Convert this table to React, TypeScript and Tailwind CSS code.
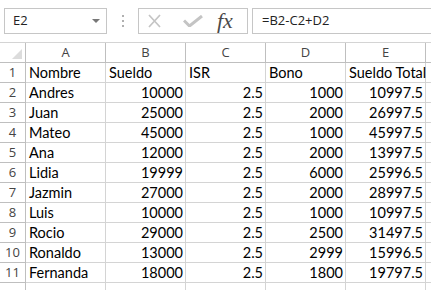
import React from 'react';

const rows = [
  ['Andres', 10000, 2.5, 1000, 10997.5],
  ['Juan', 25000, 2.5, 2000, 26997.5],
  ['Mateo', 45000, 2.5, 1000, 45997.5],
  ['Ana', 12000, 2.5, 2000, 13997.5],
  ['Lidia', 19999, 2.5, 6000, 25996.5],
  ['Jazmin', 27000, 2.5, 2000, 28997.5],
  ['Luis', 10000, 2.5, 1000, 10997.5],
  ['Rocio', 29000, 2.5, 2500, 31497.5],
  ['Ronaldo', 13000, 2.5, 2999, 15996.5],
  ['Fernanda', 18000, 2.5, 1800, 19797.5],
];

const headers = ['Nombre', 'Sueldo', 'ISR', 'Bono', 'Sueldo Total'];
const cols = ['A', 'B', 'C', 'D', 'E'];

const cellFont = { fontFamily: 'Lato, "Liberation Sans", sans-serif' };
const uiFont = { fontFamily: '"Open Sans", "Liberation Sans", sans-serif' };

const App = () => {
  return (
    <div className="w-[431px] h-[290px] overflow-hidden bg-white">
      {/* Barra de fórmulas */}
      <div className="h-[43px] flex items-start pt-[8px] pl-[4px] border-b border-[#d4d4d4]" style={uiFont}>
        <div className="w-[103px] h-[26px] border border-[#c6c6c6] flex items-center justify-between pl-[8px] pr-[6px]">
          <span className="text-[13px] text-[#222]">E2</span>
          <svg width="8" height="5" viewBox="0 0 8 5"><path d="M0 0h8L4 4z" fill="#777" /></svg>
        </div>
        <div className="w-[31px] h-[26px] flex flex-col items-center justify-center gap-[3px]">
          <span className="w-[2px] h-[2px] bg-[#b0b0b0]" />
          <span className="w-[2px] h-[2px] bg-[#b0b0b0]" />
          <span className="w-[2px] h-[2px] bg-[#b0b0b0]" />
        </div>
        <div className="w-[110px] h-[26px] border border-[#c6c6c6] flex items-center">
          <svg className="ml-[9px]" width="13" height="14" viewBox="0 0 13 14">
            <path d="M1 1L12 13M12 1L1 13" stroke="#c4c4c4" strokeWidth="1.7" />
          </svg>
          <svg className="ml-[22px]" width="20" height="12" viewBox="0 0 20 12">
            <path d="M1 5.5l5.5 5.5L19 1" stroke="#c4c4c4" strokeWidth="3" fill="none" />
          </svg>
          <span className="ml-[14px] text-[22px] italic text-[#4a4a4a] leading-none" style={{ fontFamily: '"Liberation Serif", serif' }}>fx</span>
        </div>
        <div className="flex-1 h-[26px] ml-[4px] border border-r-0 border-[#c6c6c6] flex items-center pl-[9px]">
          <span className="text-[13px] text-[#222]">=B2-C2+D2</span>
        </div>
      </div>

      {/* Hoja */}
      <div className="grid grid-cols-[26px_80px_80px_80px_80px_80px_80px] auto-rows-[20px]" style={cellFont}>
        <div className="border-r border-b border-[#bfbfbf] relative">
          <svg className="absolute right-[3px] bottom-[3px]" width="10" height="10" viewBox="0 0 10 10">
            <path d="M10 0V10H0z" fill="#dcdcdc" />
          </svg>
        </div>
        {[...cols, ''].map((c, i) => (
          <div key={i} className="border-r border-b border-[#bfbfbf] flex items-center justify-center text-[13px] text-[#444]" style={uiFont}>
            {c}
          </div>
        ))}

        {[headers, ...rows].map((row, r) => (
          <React.Fragment key={r}>
            <div className="border-r border-b border-[#bfbfbf] flex items-center justify-center text-[13px] text-[#444]" style={uiFont}>
              {r + 1}
            </div>
            {row.map((v, c) => (
              <div
                key={c}
                className={`border-r border-b border-[#d4d4d4] flex items-center whitespace-nowrap text-[14.5px] text-black ${typeof v === 'number' ? 'justify-end pr-[2px]' : 'pl-[3px]'}`}
              >
                {v}
              </div>
            ))}
            <div className="border-r border-b border-[#d4d4d4]" />
          </React.Fragment>
        ))}

        <div className="border-r border-[#bfbfbf]" />
        {[0, 1, 2, 3, 4, 5].map((i) => (
          <div key={i} className="border-r border-[#d4d4d4]" />
        ))}
      </div>
    </div>
  );
};

export default App;
